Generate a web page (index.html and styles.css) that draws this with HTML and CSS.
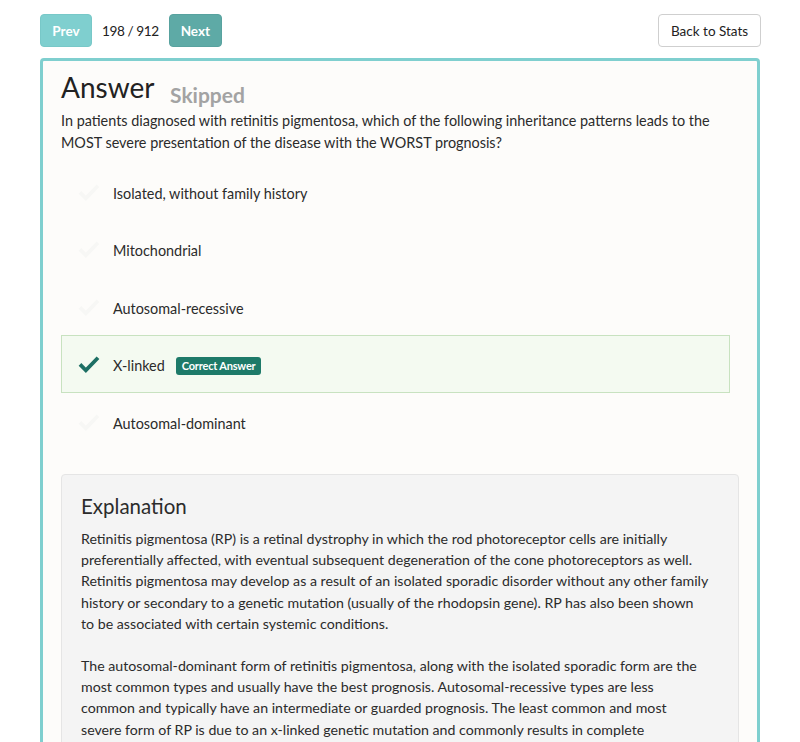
FILE: index.html
```html
<!DOCTYPE html>
<html>
<head>
<meta charset="utf-8">
<link rel="stylesheet" href="styles.css">
</head>
<body>
<div class="wrap">
  <div class="topbar">
    <div class="nav">
      <button class="btn btn-prev">Prev</button>
      <span class="count">198 / 912</span>
      <button class="btn btn-next">Next</button>
    </div>
    <button class="btn btn-back">Back to Stats</button>
  </div>
  <div class="panel">
    <h1 class="title">Answer <span class="status">Skipped</span></h1>
    <p class="question">In patients diagnosed with retinitis pigmentosa, which of the following inheritance patterns leads to the MOST severe presentation of the disease with the WORST prognosis?</p>
    <ul class="options">
      <li class="option"><span class="ico faint"><svg viewBox="0 0 24 20" width="22" height="18"><path d="M2 10.5 L8.5 17 L22 3" fill="none" stroke="currentColor" stroke-width="4.2"/></svg></span><span class="opt-text">Isolated, without family history</span></li>
      <li class="option"><span class="ico faint"><svg viewBox="0 0 24 20" width="22" height="18"><path d="M2 10.5 L8.5 17 L22 3" fill="none" stroke="currentColor" stroke-width="4.2"/></svg></span><span class="opt-text">Mitochondrial</span></li>
      <li class="option"><span class="ico faint"><svg viewBox="0 0 24 20" width="22" height="18"><path d="M2 10.5 L8.5 17 L22 3" fill="none" stroke="currentColor" stroke-width="4.2"/></svg></span><span class="opt-text">Autosomal-recessive</span></li>
      <li class="option correct"><span class="ico ok"><svg viewBox="0 0 24 20" width="22" height="18"><path d="M2 10.5 L8.5 17 L22 3" fill="none" stroke="currentColor" stroke-width="4.2"/></svg></span><span class="opt-text">X-linked</span><span class="badge">Correct Answer</span></li>
      <li class="option"><span class="ico faint"><svg viewBox="0 0 24 20" width="22" height="18"><path d="M2 10.5 L8.5 17 L22 3" fill="none" stroke="currentColor" stroke-width="4.2"/></svg></span><span class="opt-text">Autosomal-dominant</span></li>
    </ul>
    <div class="explanation">
      <h2 class="exp-title">Explanation</h2>
      <p>Retinitis pigmentosa (RP) is a retinal dystrophy in which the rod photoreceptor cells are initially<br>preferentially affected, with eventual subsequent degeneration of the cone photoreceptors as well.<br>Retinitis pigmentosa may develop as a result of an isolated sporadic disorder without any other family<br>history or secondary to a genetic mutation (usually of the rhodopsin gene). RP has also been shown<br>to be associated with certain systemic conditions.</p>
      <p>The autosomal-dominant form of retinitis pigmentosa, along with the isolated sporadic form are the<br>most common types and usually have the best prognosis. Autosomal-recessive types are less<br>common and typically have an intermediate or guarded prognosis. The least common and most<br>severe form of RP is due to an x-linked genetic mutation and commonly results in complete<br>blindness by the fourth decade of life.</p>
    </div>
  </div>
</div>
</body>
</html>
```
FILE: styles.css
```css
* { box-sizing: border-box; }
html, body { margin: 0; padding: 0; background: #fff; }
body {
  font-family: Lato, "Open Sans", sans-serif;
  color: #2b2b2b;
  font-size: 14.4px;
}
.wrap {
  width: 720px;
  margin: 0 auto;
  padding-top: 14px;
}
.topbar {
  display: flex;
  justify-content: space-between;
  align-items: center;
  height: 33px;
}
.nav { display: flex; align-items: center; }
.btn {
  font-family: inherit;
  font-size: 13.5px;
  height: 33px;
  border-radius: 4px;
  cursor: pointer;
  white-space: nowrap;
}
.btn-prev, .btn-next {
  color: #fff;
  font-weight: 700;
  border: 1px solid transparent;
  padding: 0;
}
.btn-prev { background: #7fcfcf; border-color: #78c8c8; width: 52px; }
.btn-next { background: #5eaaa6; border-color: #58a29f; width: 53px; }
.count { margin: 0 10px; font-size: 13.6px; color: #222; letter-spacing: -0.4px; }
.btn-back {
  background: #fff;
  border: 1px solid #cfcfcf;
  color: #222;
  padding: 0 12px;
  width: 103px;
  margin-right: -1px;
}
.panel {
  margin-top: 11px;
  border: 3px solid #7fcfcf;
  border-radius: 4px;
  background: #fdfcfa;
  padding: 9px 18px 30px 18px;
  height: 700px;
}
.title {
  margin: 0;
  font-weight: 400;
  font-size: 28px;
  line-height: 34px;
  color: #222;
}
.status {
  font-size: 21px;
  font-weight: 700;
  color: #a3a3a3;
  margin-left: 9px;
  position: relative;
  top: 5px;
}
.question {
  margin: 3px 0 0 0;
  line-height: 22px;
  color: #2b2b2b;
}
.options {
  list-style: none;
  margin: 8.5px 9px 0 0;
  padding: 0;
}
.option {
  display: flex;
  align-items: center;
  height: 57.5px;
  border: 1px solid transparent;
  padding: 4px 0 0 16px;
}
.option.correct {
  background: #f4faf1;
  border-color: #c8e2c0;
}
.ico { width: 35px; display: flex; align-items: center; margin-top: -3px; }
.ico.faint { color: #f7f7f5; }
.ico.ok { color: #1d6f64; }
.opt-text { font-size: 14.4px; }
.badge {
  margin-left: 11px;
  background: #1d7a69;
  color: #fff;
  font-size: 11px;
  font-weight: 700;
  padding: 2px 6px;
  border-radius: 3px;
  line-height: 14px;
  letter-spacing: -0.2px;
}
.explanation {
  margin-top: 24px;
  background: #f4f4f4;
  border: 1px solid #e5e5e5;
  border-radius: 4px;
  padding: 16px 10px 16px 19px;
}
.exp-title {
  margin: 0 0 7px 0;
  font-weight: 400;
  font-size: 20.5px;
  line-height: 30px;
  color: #2b2b2b;
}
.explanation p {
  margin: 0 0 21px 0;
  line-height: 21.2px;
  font-size: 14.2px;
  white-space: nowrap;
}
```
